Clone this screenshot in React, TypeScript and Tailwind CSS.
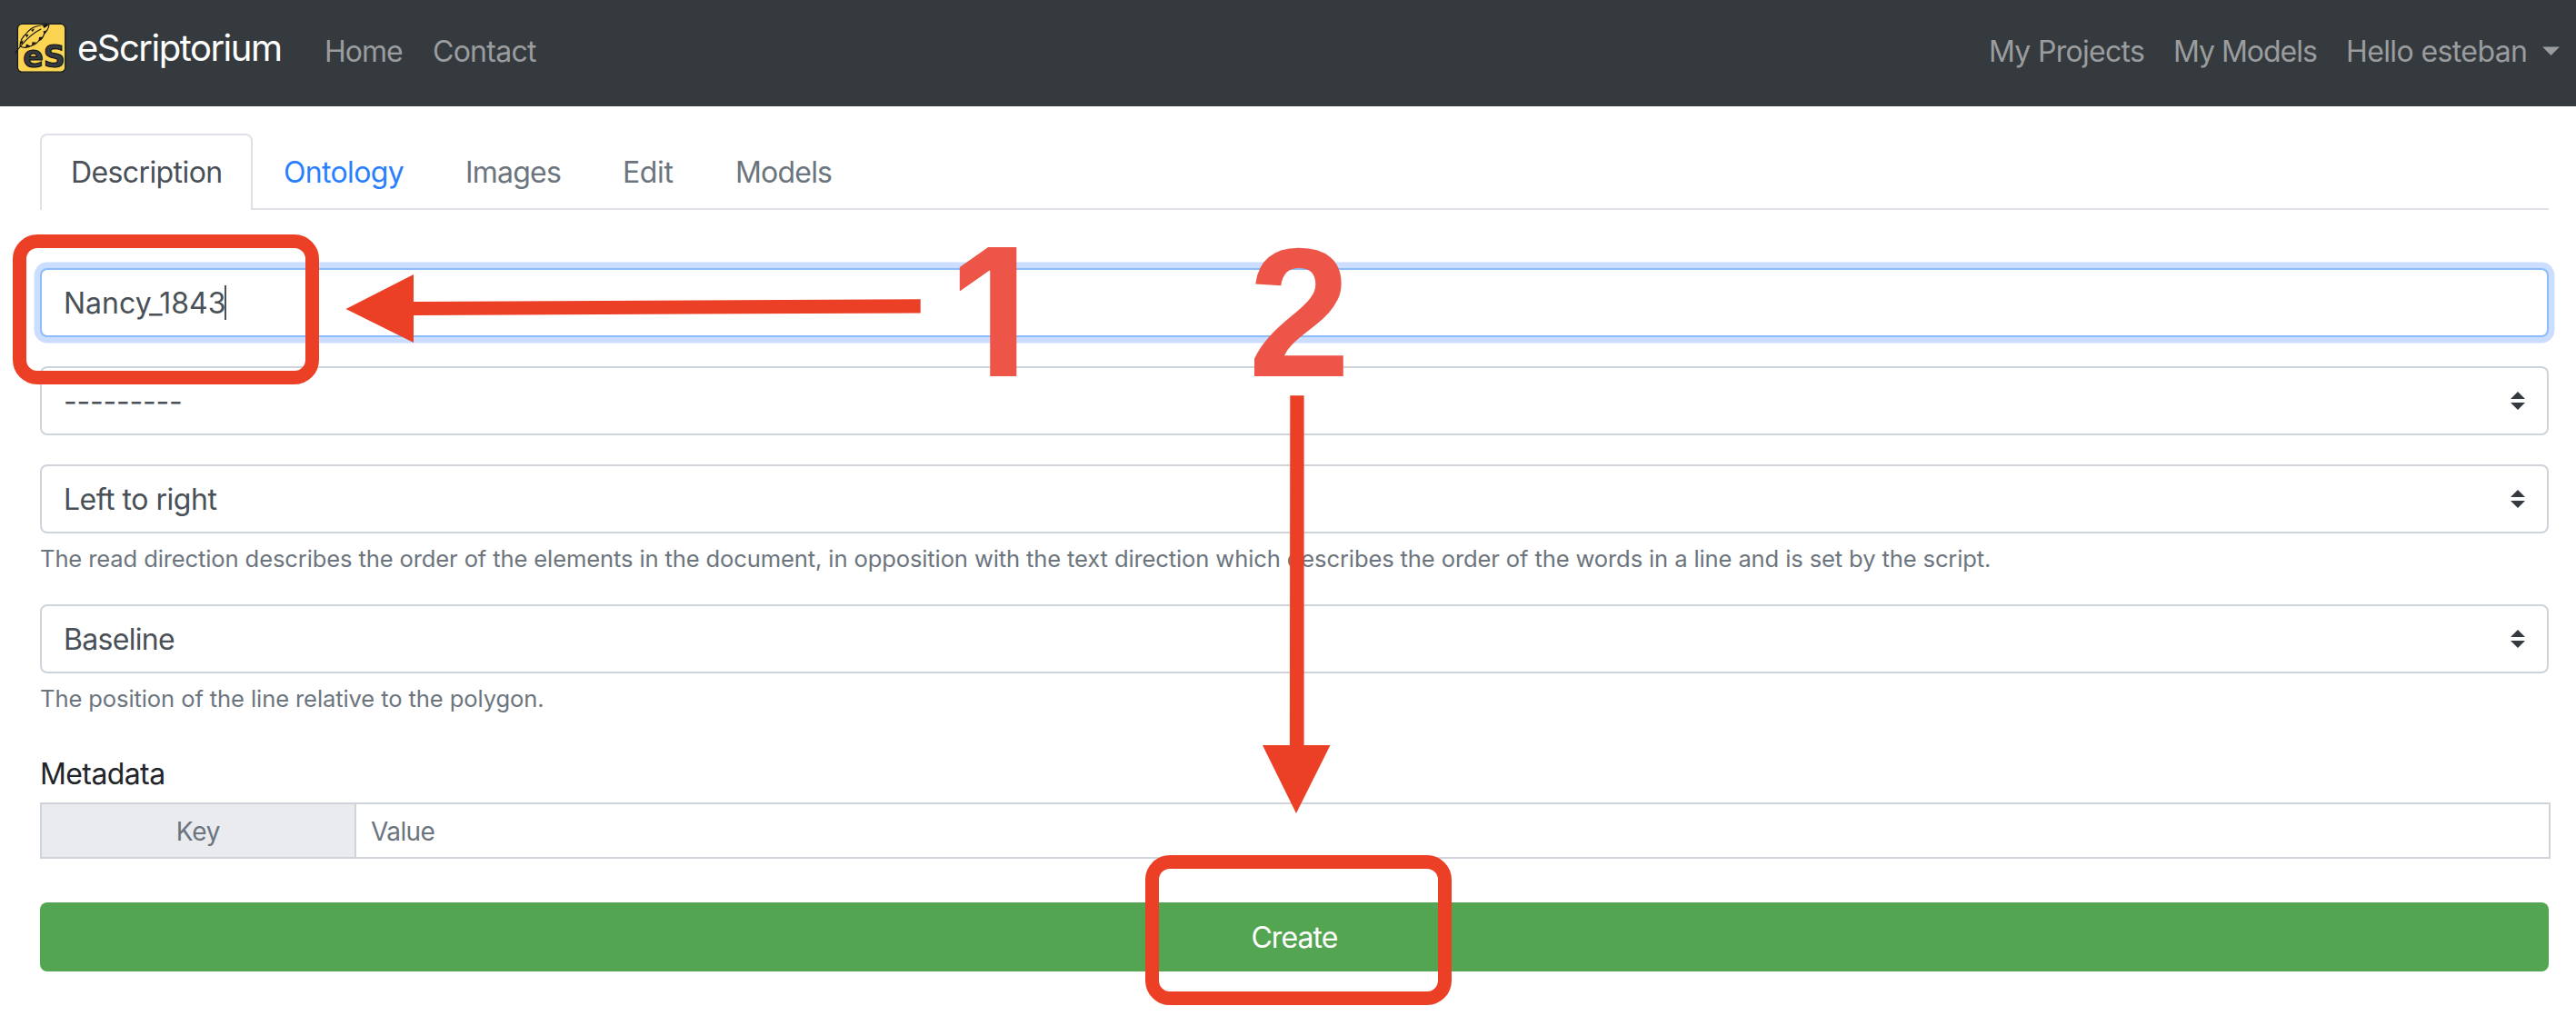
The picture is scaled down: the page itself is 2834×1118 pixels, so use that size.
import React from "react";

function Logo() {
  return (
    <svg className="h-[60px] w-[60px] shrink-0" viewBox="0 0 60 60">
      <rect x="3.4" y="3.4" width="52.4" height="52.8" rx="5" fill="#fbd452" stroke="#16191b" strokeWidth="1.3" />
      <g fill="none" stroke="#111" strokeWidth="1.1" strokeLinecap="round" strokeLinejoin="round">
        <path d="M1 35 Q4 31 6.500 28 Q17 15 29 9" />
        <path d="M6 28 Q6 20 12 15 Q17 8 24 6 Q31 4 38 4.700 Q37 10 32.500 14.500 Q31 20 26.500 22 Q23 26.500 19 27.300 Q12 31 6 28" />
      </g>
      <path
        fill="#111"
        d="M6 24 l3.500 -3 l-1 5z M12 15 l3.500 0 l-2 3.500z M18 10 l4 -1.500 l-2 3.500z M12 29.500 l1 -4 l4.500 2z M19 27.300 l0.500 -4 l5 0.500z M26.500 22 l0.500 -4 l4.500 -0.500z M31 5 l6 0 l-4.500 3z M32.500 14.500 l-1 -3 l3.500 -1z"
      />
      <text
        x="9.200"
        y="50.900"
        textLength="46.500"
        lengthAdjust="spacingAndGlyphs"
        fill="#343a40"
        stroke="#111"
        strokeWidth="1.1"
        className="font-['DejaVu_Sans'] text-[33px] font-bold"
      >
        eS
      </text>
    </svg>
  );
}

function SelectArrows() {
  return (
    <svg className="h-5 w-4 shrink-0" viewBox="0 0 16 20" fill="#343a40">
      <path d="M8 0 L16 8 H0Z M0 12 H16 L8 20Z" />
    </svg>
  );
}

function Select({ value, className }: { value: string; className: string }) {
  return (
    <div className="flex h-[76px] items-center justify-between rounded-lg border-2 border-[#ced4da] bg-white px-6 text-[#495057]">
      <span className={className}>{value}</span>
      <SelectArrows />
    </div>
  );
}

export default function App() {
  return (
    <div className="relative h-[1118px] w-[2834px] overflow-hidden bg-white font-['Inter',sans-serif] text-[32px] leading-[48px] whitespace-nowrap text-[#212529]">
      <nav className="flex h-[117px] items-start bg-[#353a3e] text-[#9a9c9e]">
        <div className="flex pt-[23px] pl-4 text-[40px] leading-[60px] text-white">
          <Logo />
          <span className="w-[281px] pl-[9px] tracking-[-1.5px]">eScriptorium</span>
        </div>
        <div className="flex pt-[33px]">
          <span className="w-[119px] tracking-[-1px]">Home</span>
          <span className="tracking-[-0.72px]">Contact</span>
        </div>
        <div className="ml-auto flex pt-[33px] pr-[18px]">
          <span className="w-[203px] tracking-[-0.7px]">My Projects</span>
          <span className="w-[190px] tracking-[-1.02px]">My Models</span>
          <span className="w-[216px] tracking-[-0.61px]">Hello esteban</span>
          <svg className="mt-[18px] h-[10px] w-[19px]" viewBox="0 0 19 10" fill="#9a9c9e">
            <path d="M0 0.500 H19 L9.500 10Z" />
          </svg>
        </div>
      </nav>

      <main className="pt-[30px] pr-[30px] pl-11">
        <div className="flex h-[84px] border-b-2 border-[#dee2e6] text-[#6c757d]">
          <div className="h-[84px] w-[234px] rounded-t-lg border-2 border-b-0 border-[#dee2e6] bg-white px-8 pt-[17px] tracking-[-0.6px] text-[#495057]">
            Description
          </div>
          <div className="w-[200px] px-[34px] pt-[19px] tracking-[-0.65px] text-[#2a7fff]">Ontology</div>
          <div className="w-[173px] px-[34px] pt-[19px] tracking-[-0.78px]">Images</div>
          <div className="w-[124px] px-[34px] pt-[19px] tracking-[-0.4px]">Edit</div>
          <div className="px-[34px] pt-[19px] tracking-[-0.8px]">Models</div>
        </div>

        <div className="mt-16 flex h-[76px] items-center rounded-lg border-2 border-[#8bbcf8] bg-white px-6 text-[#495057] shadow-[0_0_0_6.4px_#cbdeff]">
          <span className="pt-[2px]">Nancy_1843</span>
          <span className="-ml-[1px] h-[38px] w-[2px] bg-[#495057]" />
        </div>

        <div className="mt-8">
          <Select value="---------" className="pt-[2px] tracking-[-0.22px]" />
        </div>

        <div className="mt-8">
          <Select value="Left to right" className="pt-[2px] tracking-[-0.48px]" />
          <div className="mt-[9px] h-[37px] text-[25.6px] leading-[38px] tracking-[-0.14px] text-[#6c757d]">
            The read direction describes the order of the elements in the document, in opposition with the text
            direction which describes the order of the words in a line and is set by the script.
          </div>
        </div>

        <div className="mt-8">
          <Select value="Baseline" className="pt-[2px] tracking-[-0.69px]" />
          <div className="mt-[9px] h-[37px] text-[25.6px] leading-[38px] tracking-[-0.12px] text-[#6c757d]">
            The position of the line relative to the polygon.
          </div>
        </div>

        <div className="mt-[41px] tracking-[-0.6px]">Metadata</div>
        <div className="mt-[7px] flex h-[62px] w-[2762px] border-2 border-[#ced4da] text-[28px] leading-[42px] text-[#6c757d]">
          <div className="w-[344px] bg-[#e9ebef] pt-[9px] text-center tracking-[-0.24px]">Key</div>
          <div className="flex-1 border-l-2 border-[#ced4da] pt-[9px] pl-4 tracking-[-0.61px]">Value</div>
        </div>

        <div className="mt-12 h-[76px] rounded-lg bg-[#53a551] pt-[15px] text-center tracking-[-0.9px] text-white">
          Create
        </div>
      </main>

      {/* Step annotations laid over the form */}
      <div className="absolute top-[258px] left-[14px] h-[165px] w-[337px] rounded-[27px] border-[15px] border-[#eb4026]" />
      <div className="absolute top-[941px] left-[1260px] h-[165px] w-[337px] rounded-[27px] border-[15px] border-[#eb4026]" />
      <svg className="absolute top-[300px] left-[380px] h-[80px] w-[634px]" viewBox="0 0 634 80" fill="#eb4026">
        <path d="M0.500 40 L75 2 V32 L632.700 29.300 V44.500 L75 47 V77Z" />
      </svg>
      <svg className="absolute top-[435px] left-[1388px] h-[461px] w-[76px]" viewBox="0 0 76 461" fill="#eb4026">
        <path d="M31.300 0.300 H46.600 V385 H75.500 L38 460 L1 385 H30.900Z" />
      </svg>
      <span className="absolute top-[243px] left-[1047px] text-[195px] leading-[200px] font-bold text-[#ec5548]">1</span>
      <span className="absolute top-[244px] left-[1373px] font-['Liberation_Sans'] text-[203px] leading-[200px] font-bold text-[#ec5548]">
        2
      </span>
    </div>
  );
}
